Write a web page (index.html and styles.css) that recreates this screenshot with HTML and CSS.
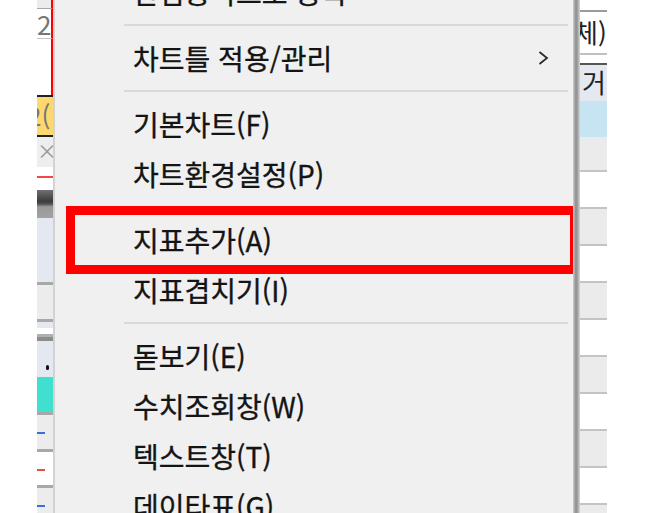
FILE: index.html
```html
<!DOCTYPE html>
<html lang="ko">
<head>
    <meta charset="UTF-8">
    <meta name="viewport" content="width=device-width, initial-scale=1.0">
    <title>차트 메뉴</title>
    <link rel="stylesheet" href="styles.css">
</head>
<body>
    <div class="screen">
        <div class="blank-left"></div>

        <div class="left-strip">
            <div class="lc lc-top marked"></div>
            <div class="lc lc-num marked">2</div>
            <div class="lc lc-white marked"></div>
            <div class="lc lc-yellow">2(</div>
            <div class="lc lc-close">×</div>
            <div class="lc lc-redline"></div>
            <div class="lc lc-dark"></div>
            <div class="lc lc-blue tall"></div>
            <div class="lc lc-rule"></div>
            <div class="lc lc-gray"></div>
            <div class="lc lc-rule"></div>
            <div class="lc lc-blue thin"></div>
            <div class="lc lc-rule light"></div>
            <div class="lc lc-rule dark"></div>
            <div class="lc lc-blue"><span class="dot"></span></div>
            <div class="lc lc-teal"></div>
            <div class="lc lc-rule"></div>
            <div class="lc lc-gray"><span class="dash blue"></span></div>
            <div class="lc lc-rule"></div>
            <div class="lc lc-white2"><span class="dash red"></span></div>
            <div class="lc lc-rule"></div>
            <div class="lc lc-gray"><span class="dash blue"></span></div>
        </div>

        <div class="menu">
            <ul class="menu-list">
                <li class="menu-item">관심종목으로 등록</li>
                <li class="menu-sep"></li>
                <li class="menu-item">
                    <span>차트틀 적용/관리</span>
                    <svg class="arrow" width="13" height="16" viewBox="0 0 13 16">
                        <path d="M2.5 2 L10 8 L2.5 14" fill="none" stroke="#2a2a2a" stroke-width="1.8"/>
                    </svg>
                </li>
                <li class="menu-sep"></li>
                <li class="menu-item">기본차트(F)</li>
                <li class="menu-item">차트환경설정(P)</li>
                <li class="menu-sep"></li>
                <li class="menu-item marked-item">지표추가(A)</li>
                <li class="menu-item">지표겹치기(I)</li>
                <li class="menu-sep"></li>
                <li class="menu-item">돋보기(E)</li>
                <li class="menu-item">수치조회창(W)</li>
                <li class="menu-item">텍스트창(T)</li>
                <li class="menu-item">데이타표(G)</li>
            </ul>
        </div>
        <div class="menu-shadow"></div>

        <div class="right-strip">
            <div class="rc rc-top"></div>
            <div class="rc rc-text">체)</div>
            <div class="rc rc-gap"></div>
            <div class="rc rc-head">거</div>
            <div class="rc rc-sel"></div>
            <div class="rc rc-gray first"></div>
            <div class="rc rc-row"></div>
            <div class="rc rc-row alt"></div>
            <div class="rc rc-row"></div>
            <div class="rc rc-row alt"></div>
            <div class="rc rc-row"></div>
            <div class="rc rc-row alt"></div>
            <div class="rc rc-row"></div>
            <div class="rc rc-row alt"></div>
            <div class="rc rc-row"></div>
            <div class="rc rc-row alt"></div>
        </div>

        <div class="blank-right"></div>
    </div>
</body>
</html>
```

FILE: styles.css
```css
* {
    margin: 0;
    padding: 0;
    box-sizing: border-box;
}

body {
    font-family: 'Noto Sans CJK KR', 'Noto Sans', sans-serif;
    background: #fff;
    width: 660px;
    height: 513px;
    overflow: hidden;
}

.screen {
    display: flex;
    height: 513px;
    overflow: hidden;
}

.blank-left {
    width: 37px;
    flex-shrink: 0;
    background: #fff;
}

.blank-right {
    flex: 1;
    background: #fff;
}

/* left part of the chart window, behind the menu */
.left-strip {
    width: 16px;
    flex-shrink: 0;
    display: flex;
    flex-direction: column;
    overflow: hidden;
}

.lc {
    flex-shrink: 0;
    position: relative;
    color: #777;
    font-size: 26px;
    line-height: 1;
    text-align: right;
    white-space: nowrap;
    overflow: hidden;
}

.lc.marked {
    border-right: 2px solid #f00;
}

.lc-top {
    height: 9px;
    background: #ececec;
    border-bottom: 1px solid #a8a8a8;
}

.lc-num {
    height: 30px;
    background: #fff;
    padding-top: 2px;
    border-bottom: 1px solid #c4c4c4;
}

.lc-white {
    height: 56px;
    background: #fff;
}

.lc-yellow {
    height: 42px;
    background: #fcd86e;
    border-top: 2px solid #222;
    border-bottom: 2px solid #222;
    padding-top: 5px;
    text-indent: -10px;
    text-align: left;
}

.lc-close {
    height: 30px;
    background: #eeeeee;
    font-size: 20px;
    padding-top: 4px;
    color: #999;
}

.lc-redline {
    height: 23px;
    background: #fff;
    border-top: 9px solid #fff;
}

.lc-redline::before {
    content: '';
    position: absolute;
    left: 0;
    right: 0;
    top: 0;
    height: 2px;
    background: #f04848;
}

.lc-dark {
    height: 28px;
    background: linear-gradient(#707070, #3c3c3c 40%, #505050 50%, #999 60%, #a2a2a2);
}

.lc-blue {
    height: 36px;
    background: #e3e8f1;
}

.lc-blue.tall {
    height: 64px;
}

.lc-blue.thin {
    height: 6px;
}

.lc-rule {
    height: 3px;
    background: #a8a8a8;
}

.lc-rule.light {
    background: #fff;
    border-bottom: 3px solid #b0b0b0;
    height: 9px;
}

.lc-rule.dark {
    height: 4px;
    background: #8c8c8c;
}

.lc-gray {
    height: 34px;
    background: #ececec;
}

.lc-teal {
    height: 35px;
    background: #40dfcf;
}

.lc-white2 {
    height: 33px;
    background: #fff;
}

.dot {
    position: absolute;
    left: 9px;
    top: 24px;
    width: 3px;
    height: 5px;
    border-radius: 2px;
    background: #111;
}

.dash {
    position: absolute;
    left: 0;
    top: 17px;
    width: 8px;
    height: 2px;
}

.dash.blue {
    background: #3b6fd8;
}

.dash.red {
    background: #ee4b43;
}

/* the context menu */
.menu {
    width: 520px;
    flex-shrink: 0;
    background: #f0f0f0;
    border-left: 2px solid #d2d2d2;
    overflow: hidden;
}

.menu-list {
    list-style: none;
    margin-top: -33px;
}

.menu-item {
    position: relative;
    height: 50px;
    padding-left: 78px;
    padding-right: 23px;
    display: flex;
    align-items: center;
    justify-content: space-between;
    font-size: 28px;
    color: #141414;
    -webkit-text-stroke: 0.35px #141414;
    white-space: nowrap;
}

.menu-sep {
    height: 16px;
    display: flex;
    align-items: center;
    padding-left: 69px;
    padding-right: 5px;
}

.menu-sep::before {
    content: '';
    flex: 1;
    height: 2px;
    background: #d9d9d9;
}

.arrow {
    flex-shrink: 0;
}

.marked-item::after {
    content: '';
    position: absolute;
    top: -9px;
    bottom: -9px;
    left: 11px;
    right: -6px;
    border: 9px solid #ff0000;
    z-index: 2;
}

.menu-shadow {
    width: 7px;
    flex-shrink: 0;
    background: linear-gradient(to right, #d0d0d0, #8e8e8e 40%, #9a9a9a 60%, #d8d8d8);
}

/* right part of the chart window */
.right-strip {
    width: 27px;
    flex-shrink: 0;
    display: flex;
    flex-direction: column;
    overflow: hidden;
}

.rc {
    flex-shrink: 0;
    font-size: 26px;
    color: #222;
    white-space: nowrap;
    overflow: hidden;
}

.rc-top {
    height: 12px;
    background: #fff;
    border-bottom: 2px solid #9a9a9a;
}

.rc-text {
    height: 43px;
    background: #fff;
    line-height: 40px;
    text-indent: -6px;
    border-bottom: 2px solid #c0c0c0;
}

.rc-gap {
    height: 10px;
    background: #fff;
    border-bottom: 2px solid #555;
}

.rc-head {
    height: 36px;
    background: #e3e8f1;
    line-height: 34px;
    padding-left: 2px;
}

.rc-sel {
    height: 36px;
    background: #c6e4f1;
}

.rc-gray {
    height: 33px;
    background: #ebebeb;
}

.rc-row {
    height: 37px;
    background: #fff;
    border-top: 2px solid #c4c4c4;
}

.rc-row.alt {
    background: #ebebeb;
}
```
